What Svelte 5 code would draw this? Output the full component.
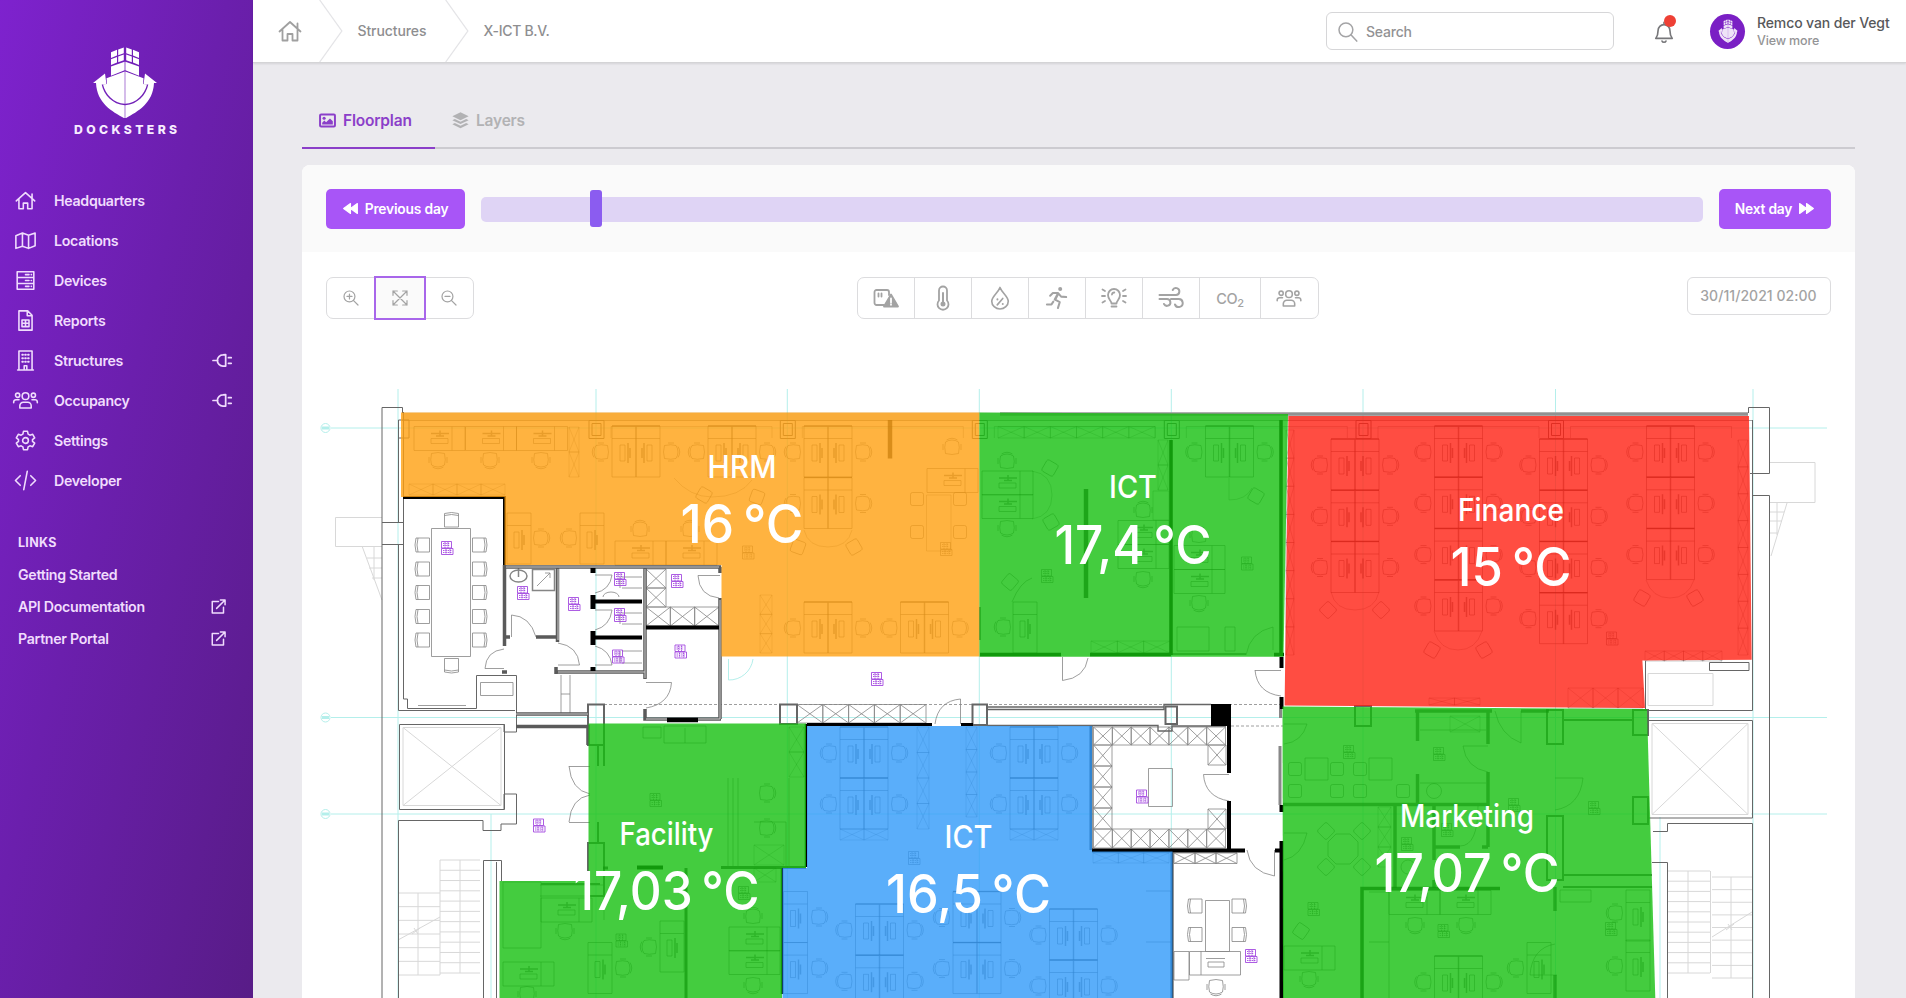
<script>
  const nav = [
    { label: 'Headquarters', icon: 'home' },
    { label: 'Locations', icon: 'map' },
    { label: 'Devices', icon: 'server' },
    { label: 'Reports', icon: 'report' },
    { label: 'Structures', icon: 'building', plug: true },
    { label: 'Occupancy', icon: 'users', plug: true },
    { label: 'Settings', icon: 'gear' },
    { label: 'Developer', icon: 'code' }
  ];
  const links = [
    { label: 'Getting Started', external: false },
    { label: 'API Documentation', external: true },
    { label: 'Partner Portal', external: true }
  ];
  const layers = ['device', 'thermo', 'drop', 'run', 'bulb', 'wind', 'co2', 'users'];

  const zones = [
    { name: 'HRM', temp: '16 °C', fill: '#ffa010', x: 742, y1: 477.5, y2: 543, w1: 69, w2: 123, pts: '401,412.5 979.5,412.5 979.5,656.5 721.5,656.5 721.5,565 504.5,565 504.5,497 401,497' },
    { name: 'ICT', temp: '17,4 °C', fill: '#15bf0f', x: 1133, y1: 497.7, y2: 564, w1: 48, w2: 157, pts: '979.5,412.5 1288,414 1283.5,656.7 979.5,656.7' },
    { name: 'Finance', temp: '15 °C', fill: '#ff2113', x: 1511, y1: 520.5, y2: 586, w1: 106, w2: 121, pts: '1288.4,416 1749,416 1751.7,659.7 1642.4,660.5 1645,708 1284.6,705.5' },
    { name: 'Facility', temp: '17,03 °C', fill: '#15bf0f', x: 666.5, y1: 844.5, y2: 909.5, w1: 94, w2: 186, pts: '588.5,723.5 806,723.5 806,868 782,868 782,998 499.5,998 499.5,881 588.5,881' },
    { name: 'ICT', temp: '16,5 °C', fill: '#319af9', x: 968.5, y1: 847.7, y2: 913, w1: 48, w2: 165, pts: '807,726 1092,726 1092,851.5 1172.5,851.5 1172.5,998 782.5,998 782.5,868 807,868' },
    { name: 'Marketing', temp: '17,07 °C', fill: '#15bf0f', x: 1467, y1: 826.7, y2: 891.7, w1: 134, w2: 185, pts: '1282.5,706.5 1647,709 1655.3,998 1283,998' }
  ];

  // paired desks, chairs on both sides
  const pods = [
    [612, 426], [708, 426], [804, 426], [804, 477.5], [804, 602], [900.5, 602], [1205.5, 426],
    [1331, 439], [1331, 490.3], [1331, 541.5],
    [1434.5, 426], [1434.5, 477.3], [1434.5, 528.6], [1434.5, 580],
    [1539.5, 439], [1539.5, 490.3], [1539.5, 541.5], [1539.5, 592.7],
    [1646.5, 426], [1646.5, 477.3], [1646.5, 528.6],
    [840, 727], [840, 778], [1010, 727], [1010, 778],
    [855.5, 904], [855.5, 955.3], [953, 891.5], [953, 942.6], [1049.5, 909], [1049.5, 960], [1434.5, 956]
  ];
  // single desks lying flat
  const flatDesks = [
    [414, 426.5], [465.5, 426.5], [516.5, 426.5], [615, 541], [666, 541],
    [541, 898], [503, 962], [729, 927], [729, 950.5], [982, 471], [982, 494.5],
    [1118, 520.5], [1118, 544.5], [1174, 545.5], [1174, 569.5], [1389, 890.5], [1440, 890.5], [1284, 946], [927, 468.5]
  ];
  // single desks standing upright
  const tallDesks = [
    [507, 513], [580, 513], [588, 942.5], [660, 921], [1013, 602], [1527, 942.5], [1626, 890], [1626, 940], [783.5, 891.5], [783.5, 942.6]
  ];
  // chairs as x, y, rotation; the back faces down at 0
  const chairs = [
    [438, 460, 0], [490, 460, 0], [541, 460, 0], [640, 529, 180], [690, 529, 180], [541, 538, -90], [569, 538, 90],
    [565, 931, 0], [527, 994, 0], [623, 968, -90], [649, 947, 90], [753, 916, 180], [753, 985, 0],
    [1007, 461, 180], [1007, 528, 0], [1143, 510, 180], [1143, 579, 0], [1199, 603, 0], [1199, 535, 180], [1003, 627, 90],
    [1415, 925, 0], [1466, 925, 0], [1309, 979, 0], [1516, 968, 90], [1615, 913, 90], [1615, 966, 90],
    [819, 917, -90], [819, 968, -90], [767, 793, -90], [767, 828, -90], [952, 447, 180]
  ];
  const softChairs = [
    [1050, 468, 30], [1051, 522, -30], [1010, 582, 40], [1256, 496, 30], [1328, 610, 45], [1381, 610, 45],
    [1432, 650, 30], [1484, 650, -30], [1642, 598, 30], [1695, 598, -30], [798, 547, 20], [854, 547, -30], [704, 495, 30], [757, 497, 20],
    [1326, 831, 45], [1362, 831, 45], [1326, 867, 45], [1362, 867, 45], [1301, 931, 35],
    [917, 499, 0], [960, 499, 0], [917, 532, 0], [960, 532, 0],
    [1295, 769, 0], [1337, 769, 0], [1360, 769, 0], [1295, 791, 0], [1337, 791, 0], [1360, 791, 0], [1403, 791, 0]
  ];
  // table chairs as x, y and the side their back is on
  const meetingChairs = [
    ...[545, 569, 592.5, 616.5, 640].flatMap((y) => [[422.5, y, -90], [479.5, y, 90]]),
    [451.5, 520, 0], [451.5, 665.5, 180], [1195, 906, -90], [1239, 906, 90], [1195, 934.5, -90], [1239, 934.5, 90]
  ];
  const openTags = [
    [447, 548], [523, 593], [574, 604], [620, 579], [620, 615], [618, 656.5], [677, 581], [680.5, 651.5], [877, 679],
    [539, 825.5], [1142, 796.5], [1251, 956]
  ];
  const zoneTags = [
    [748, 552.5], [946, 549], [1047, 576], [1247, 563.5], [1612, 638.5],
    [655.5, 800], [621.5, 940.5], [744, 893], [914, 858], [1349, 752], [1439, 754], [1594, 808], [1313.5, 909],
    [1443.5, 931], [1611, 929], [1447, 830], [1407, 844], [1514, 805]
  ];
  const gridX = [398, 596, 787.3, 979.3, 1171.3, 1363, 1555.5, 1753];

  // a run of n crossed cabinets
  function run(x, y, w, h, n, vertical = false) {
    let d = '';
    for (let i = 0; i < n; i++) {
      const a = vertical ? x : x + (w / n) * i;
      const b = vertical ? y + (h / n) * i : y;
      const cw = vertical ? w : w / n;
      const ch = vertical ? h / n : h;
      d += `M${a} ${b}h${cw}v${ch}h${-cw}zl${cw} ${ch}m0 ${-ch}l${-cw} ${ch}`;
    }
    return d;
  }
  const cabinets = [
    run(646, 569, 20, 38, 2, true), run(646, 607, 73, 19, 3), run(797, 704.5, 129, 18.5, 5),
    run(1093.5, 727, 132, 18, 7), run(1093.5, 745, 18.5, 84, 4, true), run(1093.5, 829, 132, 19, 7),
    run(1208, 745, 18, 20, 1), run(1208, 809, 18, 20, 1), run(1174, 853, 63, 10.5, 3)
  ].join('');
  const softCabinets = [
    run(409, 484, 96, 11, 4), run(569, 427, 10, 50, 2, true), run(760, 595, 12, 58, 3, true), run(998, 426.5, 157, 11.5, 6),
    run(1158, 440, 10, 50, 2, true), run(1091, 641, 79, 12, 3), run(789, 727, 15, 50, 2, true), run(917, 727, 12, 102, 4, true),
    run(966, 727, 11, 90, 4, true), run(1093, 853, 76, 10, 3), run(1010, 829, 48, 11, 2), run(840, 829, 48, 11, 2),
    run(1645, 651, 77, 10, 4), run(1568, 688, 75, 20, 3), run(1738, 440, 10, 215, 8, true), run(1286, 430, 8, 225, 8, true),
    run(1378, 807, 13, 60, 3, true), run(1450, 716, 30, 16, 1), run(1429, 698, 51, 7, 2), run(754, 868, 22, 14, 1), run(754, 845, 30, 20, 1)
  ].join('');

  function steps(x1, x2, y1, y2, n) {
    let d = '';
    for (let i = 0; i <= n; i++) d += `M${x1} ${y1 + ((y2 - y1) / n) * i}H${x2}`;
    return d;
  }
  const stairs = [
    steps(398, 440, 893, 975, 6), steps(440, 480, 860, 973, 11), steps(1668, 1710, 871, 973, 10), steps(1712, 1752, 877, 978, 8),
    'M440 860V975M460 860V973M418 893V975M1688 871V973M1710.5 871V973M1731 877V978M398 940L440 917M1712 937L1752 912',
    'M412 934l8 -6M414 928l4 6M1726 930l8 -6M1728 924l4 6',
    'M362 546L382 600M367 558H382M369 568H382M372 578H382M374 546V580M1787 503L1771 556M1770 512H1784M1770 521H1782M1770 533H1778M1777 503V535'
  ].join('');
</script>

{#snippet ship()}
  <g fill="#fff">
    <path d="M18 5.500l6-2.500v6l-6 2.500zM25.200 2.600l5.600-2v6l-5.600 2zM38.800 2.600l-5.600-2v6l5.600 2zM46 5.500l-6-2.500v6l6 2.500zM18 13l6-2.500v6l-6 2.500zM25.200 10l5.600-2v6l-5.600 2zM38.800 10l-5.600-2v6l5.600 2zM46 13l-6-2.500v6l6 2.500z" />
    <path d="M18 20.500l13.600-5v9L18 30.500zM46 20.500l-13.600-5v9L46 30.500z" />
    <path d="M31.700 26v34C21 59.500 12.500 50 10 39.500l4-.500L13.500 33z" />
    <path d="M32.300 26v34C43 59.500 51.500 50 54 39.500l-4-.500.500-6z" />
    <path d="M0 38L12 28l1.500 11.500H8.700c2 11 11 21 23 22V75.500C20 68.500 4 60 3 38z" />
    <path d="M64 38L52 28l-1.500 11.500h4.800c-2 11-11 21-23 22V75.500C44 68.500 60 60 61 38z" />
  </g>
{/snippet}

{#snippet icon(name)}
  <svg class="ico i-{name}" viewBox="0 0 24 24" fill="none" stroke="currentColor" stroke-width="1.8" stroke-linejoin="round" stroke-linecap="round">
    {#if name === 'home'}
      <path d="M1.500 12.500L12 3l10.500 9.500M19.500 9.500V4.500M4.500 10.500V21.500H9.500V15H14.500V21.500H19.500V10.500" />
    {:else if name === 'map'}
      <path d="M1 6.500L8.500 3.500 15.500 6 23 3.500V18L15.500 21 8.500 18.500 1 21zM8.500 3.500V18.500M15.500 6V21" />
    {:else if name === 'server'}
      <path d="M2.500 2h19v20h-19zM2.500 8.600h19M2.500 15.400h19M12 5.300h4M12 12h4M12 18.700h4M18.600 5.300h.2M18.600 12h.2M18.600 18.700h.2" />
    {:else if name === 'report'}
      <path d="M4.500 1h10l5 5V23H4.500zM14 1.300V6.500H19M8 11.500h8v7.500H8zM8 15.200h8M12 11.500v7.500" />
    {:else if name === 'building'}
      <path d="M3 22.800H21M4.500 22.800V1.200H19.500V22.800M10.500 22v-4h3v4" />
      <path d="M8.300 5.500h.8M11.600 5.500h.8M14.900 5.500h.8M8.300 9.500h.8M11.600 9.500h.8M14.900 9.500h.8M8.300 13.500h.8M11.600 13.500h.8M14.900 13.500h.8" stroke-width="2.200" />
    {:else if name === 'users'}
      <circle cx="12" cy="7" r="3.800" /><circle cx="3" cy="6" r="2.400" /><circle cx="21" cy="6" r="2.400" />
      <path d="M5.500 20.500v-2.500a4 4 0 0 1 4-4h5a4 4 0 0 1 4 4V20.500zM-1.500 14.500v-.8a2.600 2.600 0 0 1 2.600-2.600h3.500M25.500 14.500v-.8a2.600 2.600 0 0 0-2.600-2.600h-3.500" />
    {:else if name === 'gear'}
      <circle cx="12" cy="12" r="3.300" />
      <path d="M9.700 1.500h4.600l.7 3.200 2 1.200 3.200-1 2.300 4-2.500 2.100v2l2.500 2.100-2.300 4-3.200-1-2 1.200-.7 3.200H9.700l-.7-3.200L7 18.100l-3.200 1-2.300-4L4 13v-2L1.500 8.900l2.300-4 3.200 1 2-1.200z" />
    {:else if name === 'code'}
      <path d="M6 6.500L.5 12 6 17.500M18 6.500L23.500 12 18 17.500M14 1.500L10 22.500" />
    {:else if name === 'plug'}
      <path d="M0 12H6M12.500 5a7 7 0 0 0 0 14H16V4.500zM19.500 8.500H23M19.500 15.500H23" stroke-width="2.200" />
    {:else if name === 'external'}
      <path d="M12 4H2V22.500H20V13M15 1.500H22.500V9M22.500 1.500L9 15" stroke-width="2.400" />
    {:else if name === 'search'}
      <circle cx="9.500" cy="10" r="8.300" /><path d="M15.500 16L22.500 23.500" />
    {:else if name === 'bell'}
      <path d="M3 19C5 16.500 5.500 14 5.500 10.500a6.500 6.500 0 0 1 13 0C18.500 14 19 16.500 21 19zM12 4V1.500M9.800 21.800a2.300 2 0 0 0 4.400 0" />
    {:else if name === 'zoomin'}
      <circle cx="9.700" cy="9.700" r="8.200" /><path d="M15.500 15.500L22.500 22.500M9.700 6v7.500M6 9.700h7.500" />
    {:else if name === 'zoomout'}
      <circle cx="9.700" cy="9.700" r="8.200" /><path d="M15.500 15.500L22.500 22.500M6 9.700h7.500" />
    {:else if name === 'expand'}
      <path d="M1.500 8V1.500H8M16 1.500H22.500V8M22.500 16V22.500H16M8 22.500H1.500V16M1.500 1.500L22.500 22.500M22.500 1.500L1.500 22.500" />
    {:else if name === 'image'}
      <rect x="1.500" y="3.500" width="21" height="17" rx="1.500" stroke-width="2.800" />
      <circle cx="7.200" cy="8.800" r="2.200" fill="currentColor" stroke="none" /><path d="M4.500 17.500V15l3-3 2.500 2.500L15.500 9 19.500 13v4.500z" fill="currentColor" stroke="none" />
    {:else if name === 'layers'}
      <g fill="currentColor" stroke="none"><path d="M12 .5L23.500 6 12 11.500.500 6z" /><path d="M.5 11.500L4 9.800l8 3.900 8-3.900 3.500 1.700L12 17z" /><path d="M.5 17.300L4 15.600l8 3.900 8-3.900 3.500 1.700L12 23z" /></g>
    {:else if name === 'back'}
      <path d="M12 4V20L1 12zM23 4V20L12 12z" fill="currentColor" />
    {:else if name === 'forward'}
      <path d="M12 4V20L23 12zM1 4V20L12 12z" fill="currentColor" />
    {:else if name === 'device'}
      <path d="M10 19H2.500a2 2 0 0 1-2-2V6a2 2 0 0 1 2-2H13a2 2 0 0 1 2 2V9M4.500 7.500v3M7.500 7.500v3" />
      <path d="M17 8.500L24 20.500H10z" fill="currentColor" /><path d="M17 12.500v4M17 18.500v.3" stroke="#fff" />
    {:else if name === 'thermo'}
      <path d="M8 14.500V4.500a4 4 0 0 1 8 0V14.500a5.500 5.500 0 1 1-8 0z" /><path d="M12 7V18" stroke-width="2" /><circle cx="12" cy="18" r="1.600" fill="currentColor" />
    {:else if name === 'drop'}
      <path d="M12 .5C14 6 21 10.500 21 15.500a9 8.500 0 0 1-18 0C3 10.500 10 6 12 .5zM15 12.500l-6 7" /><circle cx="9.200" cy="13.500" r="1.100" fill="currentColor" stroke="none" /><circle cx="15" cy="18.500" r="1.100" fill="currentColor" stroke="none" />
    {:else if name === 'run'}
      <circle cx="15.500" cy="2.200" r="2.200" fill="currentColor" stroke="none" /><path d="M4.500 9.500L7.500 6.500h5.500L16.500 10.500 22 11M13 7L9.500 13.500 15 16.500 13 23M12.500 9L10 14M8 16L6 19H1" stroke-width="2.200" />
    {:else if name === 'bulb'}
      <path d="M9.500 17.500c0-3-3.500-4-3.500-8.500a6 6 0 0 1 12 0c0 4.500-3.500 5.500-3.500 8.500zM9.500 20.500h5M10 8.500a2.300 2.300 0 0 1 2.300-2M3 10H0M3 5L.5 3.500M3 15L.5 16.500M21 10h3M21 5l2.500-1.500M21 15l2.500 1.500" />
    {:else if name === 'wind'}
      <path d="M.5 9H17a3.500 3.500 0 1 0-3.300-5M.5 13H8a3.400 3.400 0 1 1-3 5M12 13h7.500a4 4 0 1 1-3.500 5.500" stroke-width="2" />
    {/if}
  </svg>
{/snippet}

<div class="app">
  <aside>
    <div class="brand">
      <svg width="64" height="71" viewBox="0 0 64 75" preserveAspectRatio="none">{@render ship()}</svg>
      <span>DOCKSTERS</span>
    </div>
    <nav>
      {#each nav as item}
        <a class="item">
          {@render icon(item.icon)}
          <span>{item.label}</span>
          {#if item.plug}{@render icon('plug')}{/if}
        </a>
      {/each}
    </nav>
    <div class="links">
      <h2>LINKS</h2>
      {#each links as link}
        <a><span>{link.label}</span>{#if link.external}{@render icon('external')}{/if}</a>
      {/each}
    </div>
  </aside>

  <div class="main">
    <header>
      <div class="crumbs">
        <a class="crumb first">{@render icon('home')}</a>
        <svg class="sep" viewBox="0 0 24 63"><path d="M.5 0L23 31.500.5 63" fill="none" stroke="#e4e4e7" stroke-width="1.300" /></svg>
        <a class="crumb second">Structures</a>
        <svg class="sep" viewBox="0 0 24 63"><path d="M.5 0L23 31.500.5 63" fill="none" stroke="#e4e4e7" stroke-width="1.300" /></svg>
        <a class="crumb third">X-ICT B.V.</a>
      </div>
      <div class="tools">
        <label class="search">{@render icon('search')}<span>Search</span></label>
        <div class="bell">{@render icon('bell')}<i></i></div>
        <div class="avatar"><svg width="20" height="24" viewBox="0 0 64 75">{@render ship()}</svg></div>
        <div class="user"><b>Remco van der Vegt</b><span>View more</span></div>
      </div>
    </header>

    <main>
      <div class="tabs">
        <a class="tab on">{@render icon('image')}<span>Floorplan</span></a>
        <a class="tab">{@render icon('layers')}<span>Layers</span></a>
      </div>

      <section class="card">
        <div class="timeline">
          <button class="day prev">{@render icon('back')}<span>Previous day</span></button>
          <div class="track"><i style="left: 108.500px"></i></div>
          <button class="day next"><span>Next day</span>{@render icon('forward')}</button>
        </div>

        <div class="toolbar">
          <div class="group zoom">
            <button>{@render icon('zoomin')}</button>
            <button class="on">{@render icon('expand')}</button>
            <button>{@render icon('zoomout')}</button>
          </div>
          <div class="group layers-group">
            {#each layers as layer}
              <button class:wide={layer === 'co2'}>
                {#if layer === 'co2'}<span class="co">CO<sub>2</sub></span>{:else}{@render icon(layer)}{/if}
              </button>
            {/each}
          </div>
          <div class="date">30/11/2021 02:00</div>
        </div>

        <svg class="plan" viewBox="302 345 1552.500 653" width="1552.500" height="653">
          <defs>
            <g id="chair">
              <path d="M-6.500 -6.500Q-8 0 -6.500 5Q0 9 6.500 5Q8 0 6.500 -6.500Q0 -8.500 -6.500 -6.500zM-9 -3V3M9 -3V3M-5.500 7Q0 10.500 5.500 7" />
            </g>
            <rect id="soft" x="-6.500" y="-6.500" width="13" height="13" rx="2" />
            <path id="seat" d="M-7 -6.500Q0 -8.500 7 -6.500V7H-7zM-7 -4.500Q0 -6.500 7 -4.500" />
            <g id="pod">
              <path d="M0 0H48V51H0zM0 12.500H48" />
              <path d="M24 0V51M0 0H48" stroke-width="1.500" />
              <path d="M8 19h5v16H8zM35 19h5v16h-5z" />
              <path d="M16 17V37M32 17V37M18 22v10M30 22v10" stroke-width="1.500" />
              <use href="#chair" transform="translate(-11 26) rotate(90)" />
              <use href="#chair" transform="translate(59 26) rotate(-90)" />
            </g>
            <g id="flat">
              <path d="M0 0H51V24H0zM38 0V24M17 12H34V17H17z" />
              <path d="M17 7H35M22 9.500H30M26 4V9" stroke-width="1.500" />
            </g>
            <g id="tall">
              <path d="M0 0H24V51H0zM0 12.500H24M7 19h5v16H7z" />
              <path d="M15 17V37M17 22v10" stroke-width="1.500" />
            </g>
            <g id="tag">
              <path d="M-5.500 -6.500H4.500V0H-5.500zM-5.500 .5H6V6.500H-5.500z" />
              <path d="M-4 -4.500H3M-4 -2.500H3M-4 2.500H5M-4 4.500H5M-2 -6V0M1 -6V0M-1 1V6M3 1V6" stroke-dasharray="1.500 .8" />
            </g>
          </defs>

          <g class="guide">
            {#each gridX as x}<path d="M{x} 389V998" />{/each}
            <path d="M331 428H1827M331 717.500H1827M331 814H1827M491 814V998M1660 800V998" />
            <circle cx="325.500" cy="428" r="4.500" /><circle cx="325.500" cy="717.500" r="4.500" /><circle cx="325.500" cy="814" r="4.500" />
            <path d="M322 428h7M322 717.500h7M322 814h7" stroke-width="3" />
            <path d="M728.500 659V680A24 24 0 0 0 753 659" />
          </g>

          <!-- rooms without a tint keep a white floor -->
          <g fill="#fff" stroke="none">
            <path d="M404 499H503V708H404zM506 568H587V714H506zM604 568H719V703H604zM400 725H504V809H400zM1649 721H1751V817H1649z" />
          </g>

          <path class="faint" d="M335.500 517.500H382M335.500 517.500V546.500H382M1769 462.500H1815V502.500H1769M403 727.500h98v78h-98zl98 78m0-78l-98 78M1652 723.500h96v91h-96zl96 91m0-91l-96 91M1648 673.500H1713V705.500H1648z" />
          <path class="faint" d={stairs} />

          <g class="furn">
            {#each pods as [x, y]}<use href="#pod" {x} {y} />{/each}
            {#each flatDesks as [x, y]}<use href="#flat" {x} {y} />{/each}
            {#each tallDesks as [x, y]}<use href="#tall" {x} {y} />{/each}
            {#each chairs as [x, y, r]}<use href="#chair" transform="translate({x} {y}) rotate({r})" />{/each}
            {#each softChairs as [x, y, r]}<use href="#soft" transform="translate({x} {y}) rotate({r})" />{/each}
            {#each zoneTags as [x, y]}<use href="#tag" {x} {y} />{/each}
            <path d={softCabinets} opacity=".6" />
            <path d="M926.500 495H951V551H926.500zM1032 471Q1052 474 1052 495Q1052 516 1032 519M1229 478V500Q1246 500 1252 488M804 530Q808 547 828 547Q848 547 852 530M1331 592Q1335 610 1355 610Q1375 610 1379 592M1434 631Q1440 650 1458 650Q1476 650 1482 631M1646 580Q1652 598 1670 598Q1688 598 1694 580M674 478Q690 497 712 497Q740 497 752 480M1153 491H1169V520H1153z" opacity=".7" />
            <path d="M664 726H706V743H664zM685 728V743M643 727H661V738H643zM728 778V866M733 778V866M738 778V866M789 778V866M754 822H786V866M503 882H541V948H503zM540 885H604M540 896H604V920M1305 758H1328V780H1305zM1369 758H1392V780H1369zM1420 783H1486M1420 730H1486M1336 834l-8 8v14l8 8h14l8-8v-14l-8-8zM1369 892H1389V998M1369 942H1389M1560 890H1591V902H1560zM1146 891H1171V998M1146 942H1171M1177 627H1209V651H1177zM1225 627H1235V651H1225zM1032 578Q1020 582 1012 602" />
            <circle cx="1434" cy="791" r="7.500" /><circle cx="1408" cy="867" r="7" />
            <path d="M1488 746H1463Q1466 768 1488 772M1521 711V743Q1500 735 1495 711M1555 778H1583Q1580 806 1555 810M1557 975H1530Q1532 948 1555 944M1284 724H1307Q1302 742 1284 744M1284 833H1307Q1302 856 1284 860M1273 627Q1250 632 1246 655M1273 627V650M1478 806Q1478 846 1460 846" />
          </g>

          <!-- tables and fittings in the open rooms -->
          <g class="thin">
            {#each meetingChairs as [x, y, r]}<use href="#seat" transform="translate({x} {y}) rotate({r})" />{/each}
            <use href="#chair" transform="translate(1216 987)" />
            <path d="M431.500 528.500H470.500V656.500H431.500zM1205.500 900.500h24v51h-24zM1148.500 768.500H1172.500V806.500H1148.500zM1174 951.500H1189V980H1174zM1189.500 951.500H1240.500V975H1189.500zM1201 951V975M1208 962h16v5h-16zM1206 958.500h19" />
            <path d={cabinets} />
            <ellipse cx="518.500" cy="576" rx="8.500" ry="6" stroke-width="1.500" /><path d="M518.500 568V577M532.500 569.500H554.500V590.500H532.500z" stroke-width="1.500" /><path d="M537 586L550 573M545 573h5v5" />
            <path d="M511.500 637V615Q530 616 536 637M558 643Q578 646 579.500 665H558M504 649Q486 651 485 668.500H504M595 575H612Q610 590 595 593M595 610H612Q610 626 595 630M595 646Q610 650 612 665H595M646 682.500H671.500Q670 704 646 708M698 575.500H720M698 575.500Q699 596 719 598" />
            <path d="M622 577H642M622 588H642M620 577V588M622 613H642M622 624H642M620 613V624M622 651H642M622 663H642M620 651V663M603 597a8 5 0 0 1 16 0M561 675V715M570 675V715M561 694h9" />
            <path d="M569 766.500H590M569 766Q571 790 590 794M569 822.500H590M569 822Q571 798 590 795M960.500 724V699Q938 701 935 724M1229 774.500H1203.500Q1205 797 1229 801M1255 670.500H1281M1255 670Q1257 693 1281 696M1274.500 850V876Q1250 872 1247 850M1062.500 657V680.500Q1085 678 1088 658" />
            <path d="M604 704.500H1283M1231 726H1283" stroke-dasharray="3 2" />
            <path d="M418 705.500H466M480.500 682.500H513V695.500H480.500z" />
          </g>

          <!-- outer and inner walls -->
          <g class="edge">
            <path d="M382 998V407.500H402.500V413M398.500 420H409V438H398.500zM398.500 438V522M382 522.500H403M382 544.500H403M398.500 544V710.500H515M403.500 412V699H407.500V708.500H476.500V675.500H516.500V732H504V724" />
            <path d="M399.500 724.500H504.500V809.500H399.500zM504 809V794H516.500V824H501V830.500H483V820.500H398.500V998M483.500 998V860.500H501.500V881M496.500 862V998" />
            <path d="M1748.500 413V407.500H1769.500V473.500H1750M1752 495.500H1769.500V998M1752.500 420V660M1752.500 495V710.500H1645.500V661M1709.500 662.500H1749V670.500H1709.500zM1649 720.500H1752.500V818H1649M1653 831.500H1667.500V823.500H1752.500V998M1652 862.500H1667.500V998" />
            <path d="M402 420.500H1752" opacity=".6" />
            {#each gridX.slice(1, 7) as x}
              <path d="M{x - 7} 420.500h15v18h-15zM{x - 4} 423.500h9v12h-9z" />
              <path d="M{x + 15} 438V426.500H{x + 176}V438" opacity=".4" />
            {/each}
            <path d="M588 704.500H604V745H588zM780 704.500H797V724H780zM972.500 704.500H987V725H972.500zM1165.500 706.500H1177V724H1165.500z" stroke-width="2" />
            <path d="M987 709.500H1164V704.500H1211M987 725.500H1158V731H1172V726H1226M988 707H1164" stroke-width="1.400" />
            <path d="M1355 706H1371V726H1355zM1547 710H1563V744H1547zM1547 816H1563V880H1547zM1633 710H1648V735H1633zM1633 797H1648V824H1633zM1563 720H1633M1563 875H1652M1563 887H1652M588 843H604V896H588zM541 884H600M604 745V766M598 745V766M598 822V843" stroke-width="2" />
          </g>
          <path d="M1000 414H1748" stroke="#a6a6a6" stroke-width="3.500" />
          <g class="wall">
            <path d="M403 497.500H504.500V565" stroke-width="3" />
            <path d="M504 567H721M504.500 565V646M506 637H510M536 637H557.500V642M557.500 567V640M556 672H645.500M556 667V674M645 567V679M516 714H588M516 726.500H588V745M645 709V719H721M720 598V719M720 567V573M502 672h5" stroke="#5a5a5a" stroke-width="3.500" />
            <path d="M506 567H719M645 569V678M558 569V640M558 672H645M516 714H588M646 719H720V600" stroke="#ccc" stroke-width="1" />
            <path d="M593 601.500H642M593 637.500H642M646 627.500H719" stroke-width="4" />
            <path d="M593 568v5M593 595v14M593 631v14M593 667v4" stroke-width="5" />
            <path d="M667 720H698" stroke-width="4.500" />
            <path d="M807 724.500H932M961 724.500H973" stroke-width="3" />
            <path d="M806 724V867M782 868V994" stroke-width="2.500" />
            <path d="M1211 704H1231V726H1211z" fill="#000" stroke="none" />
            <path d="M1229 726V773M1229 801V849M1092 850.500H1245M1275 850.500H1283M1281.500 657V668M1281.500 697V709M1281.500 805V812M1281.500 841V998" stroke-width="4" />
            <path d="M1091 726V850M1172 852V998" stroke-width="3" stroke="#333" />
            <path d="M1280.500 709V718M1280 746V805" stroke="#888" stroke-width="3" />
            <path d="M890 420V458.500M1086 489V598" stroke-width="4.500" opacity=".75" />
            <path d="M1281 420V656M980 654.500H1061M1090 654.500H1171M1171 440V655M1274 654.500H1284" stroke-width="3.500" />
            <path d="M1171 654H1246M980 607V640" stroke-width="2" opacity=".5" />
            <path d="M402 416.500H1748" stroke-width="8" opacity=".12" />
            <path d="M721 867.500H806M686 868V998M603 868h5" stroke-width="3" opacity=".7" /><path d="M637 867.500H663" stroke-width="4" />
            <path d="M1417.500 711V741M1417.500 774V805M1415 711H1492M1488 711V744M1488 772V847M1521 711H1549M1283 804.500H1488M1395 806V888M1434 806V860M1434 847H1460M1434 880v8M1482 847h6M1555 887V911M1555 975V998" stroke-width="3.500" opacity=".6" />
            <path d="M1500 888.500H1362V998" stroke-width="3.500" opacity=".8" />
          </g>
          <g class="tag">
            {#each openTags as [x, y]}<use href="#tag" {x} {y} />{/each}
          </g>

          {#each zones as z}
            <polygon points={z.pts} fill={z.fill} fill-opacity=".8" />
          {/each}
          <g class="reading">
            {#each zones as z}
              <text x={z.x} y={z.y1} font-size="31" textLength={z.w1} lengthAdjust="spacingAndGlyphs">{z.name}</text>
              <text class="temp" x={z.x} y={z.y2} font-size="53" textLength={z.w2} lengthAdjust="spacingAndGlyphs">{z.temp}</text>
            {/each}
          </g>
        </svg>
      </section>
    </main>
  </div>
</div>

<style>
  :global(body) { margin: 0; overflow: hidden; }
  .app { display: flex; width: 1906px; height: 998px; overflow: hidden; font-family: Inter, "Liberation Sans", sans-serif; font-weight: 500; background: #ebeaee; }
  .ico { flex: none; overflow: visible; width: 20px; height: 20px; }
  button { font: inherit; color: inherit; background: none; border: 0; padding: 0; box-sizing: border-box; }

  aside { flex: none; width: 252.500px; color: #f0dcfd; background: linear-gradient(to bottom right, #7e22ce, #6b1fad 45%, #581c87); font-size: 14.200px; font-weight: 600; }
  .brand { display: flex; flex-direction: column; align-items: center; height: 133.500px; padding: 47px 2px 0 0; color: #f7ecff; }
  .brand span { margin-top: 4px; margin-left: 4px; font-weight: 800; font-size: 12.200px; line-height: 15px; letter-spacing: 3.400px; }
  nav { display: flex; flex-direction: column; }
  .item { display: flex; align-items: center; height: 40px; padding: 0 21px 0 15px; }
  .item span { flex: 1; margin-left: 18px; letter-spacing: -.3px; }
  .item .ico { width: 21px; height: 21px; }
  .item .ico.i-plug { width: 19px; height: 19px; }
  .links { display: flex; flex-direction: column; padding: 32px 27px 0 18px; letter-spacing: -.3px; }
  .links h2 { margin: 0 0 6px; font-size: 12.500px; line-height: 20px; font-weight: 700; letter-spacing: .3px; }
  .links a { display: flex; align-items: center; justify-content: space-between; height: 32px; }
  .links .ico { width: 15px; height: 15px; }

  .main { flex: 1; display: flex; flex-direction: column; min-width: 0; }
  header { display: flex; justify-content: space-between; height: 62px; background: #fff; border-bottom: 1px solid #d4d4d6; box-shadow: 0 1px 2px rgba(0, 0, 0, .1); }
  .crumbs { display: flex; align-items: center; color: #8e8e90; font-size: 14px; line-height: 20px; }
  .sep { width: 24px; height: 62px; }
  .crumb.first { display: flex; width: 40.500px; padding-left: 25.500px; }
  .crumb.first .ico { width: 24px; height: 24px; color: #a0a0a0; }
  .crumb.second { width: 87px; padding-left: 15px; letter-spacing: -.1px; }
  .crumb.third { padding-left: 15px; letter-spacing: -.3px; }
  .tools { display: flex; align-items: center; padding-right: 16px; }
  .search { display: flex; align-items: center; gap: 8px; box-sizing: border-box; width: 288px; height: 38px; padding-left: 11px; border: 1px solid #d6d6d8; border-radius: 6px; color: #929294; font-size: 14px; font-weight: 500; letter-spacing: -.2px; }
  .search .ico { width: 20px; height: 21px; color: #a4a4a6; }
  .bell { position: relative; margin-left: 39px; width: 22px; height: 22px; color: #77777a; }
  .bell .ico { display: block; width: 22px; height: 22px; margin-top: 1px; }
  .bell i { position: absolute; left: 11px; top: -5px; width: 12px; height: 12px; border-radius: 50%; background: #ee4035; }
  .avatar { display: flex; align-items: center; justify-content: center; width: 35px; height: 35px; margin-left: 35px; border-radius: 50%; background: #7a1fc4; }
  .avatar svg { opacity: .88; }
  .user { display: flex; flex-direction: column; width: 133px; margin-left: 12px; white-space: nowrap; }
  .user b { font-size: 14px; font-weight: 500; line-height: 18px; color: #58585a; letter-spacing: -.12px; }
  .user span { font-size: 12.500px; line-height: 17px; color: #949496; letter-spacing: -.15px; }

  main { flex: 1; display: flex; flex-direction: column; padding: 28px 51.500px 0 49.500px; min-height: 0; }
  .tabs { display: flex; height: 55.500px; border-bottom: 2px solid #cccbd0; }
  .tab { display: flex; align-items: center; gap: 7px; box-sizing: border-box; height: 57.500px; padding: 4px 19px 0 17px; font-size: 15.500px; font-weight: 600; color: #b2b2b4; border-bottom: 2px solid transparent; letter-spacing: -.2px; }
  .tab.on { width: 133px; color: #8b3fc9; border-color: #8b3fc9; }
  .tab .ico { width: 17px; height: 17px; }
  .card { flex: 1; margin-top: 16.500px; border-radius: 8px 8px 0 0; background: #fff; overflow: hidden; }
  .timeline { display: flex; align-items: flex-start; box-sizing: border-box; height: 87px; padding: 24px 24px 0; background: #fafafa; }
  .day { display: flex; align-items: center; justify-content: center; gap: 7px; height: 40px; padding-bottom: 1px; border-radius: 5px; background: #a855f7; color: #fff; font-size: 13.800px; font-weight: 600; letter-spacing: -.2px; }
  .day .ico { width: 15px; height: 15px; }
  .prev { width: 139px; }
  .next { width: 112px; }
  .track { position: relative; flex: 1; height: 24.500px; margin: 8px 16px 0; border-radius: 5px; background: #dfd4f5; }
  .track i { position: absolute; top: -7px; width: 12.500px; height: 37px; border-radius: 3px; background: #8b5cf0; }
  .toolbar { display: flex; justify-content: space-between; align-items: flex-start; height: 68px; padding: 25px 24px 0; color: #a3a3a3; }
  .group { display: flex; box-sizing: border-box; height: 42px; border: 1px solid #dcdcde; border-radius: 7px; }
  .group button { display: flex; align-items: center; justify-content: center; height: 40px; }
  .zoom button { width: 48px; }
  .zoom .ico { width: 16px; height: 16px; }
  .zoom button.on { width: 52px; height: 44px; margin: -2px -1px 0; border: 2px solid #a866ea; background: #fafafa; }
  .layers-group { margin-left: 171px; margin-right: 156px; }
  .layers-group button { width: 57px; border-right: 1px solid #dcdcde; }
  .layers-group button.wide { width: 61px; }
  .layers-group button:last-child { width: 56.500px; border: 0; }
  .layers-group .ico { width: 24px; height: 24px; }
  .layers-group .ico.i-run, .layers-group .ico.i-drop { width: 22px; height: 24px; }
  .layers-group .ico.i-users { width: 22px; height: 21px; }
  .co { font-size: 14.500px; letter-spacing: -.3px; }
  .co sub { font-size: 11px; vertical-align: -3px; line-height: 0; }
  .date { box-sizing: border-box; width: 144px; height: 38px; border: 1px solid #dcdcde; border-radius: 6px; font-size: 14px; line-height: 36px; text-align: center; letter-spacing: .05px; white-space: nowrap; }

  .plan { display: block; fill: none; }
  .guide { stroke: #b4efeb; stroke-width: 1; }
  .faint { stroke: #d8d8d8; stroke-width: 1; }
  .furn { stroke: #222; stroke-opacity: .5; stroke-width: .8; }
  .thin { stroke: #858585; stroke-width: .8; }
  .edge { stroke: #666; stroke-width: 1; }
  .wall { stroke: #000; }
  .tag { stroke: #a44be0; stroke-width: .9; }
  .reading { fill: #fff; text-anchor: middle; font-weight: 500; }
  .temp { word-spacing: -5px; }
</style>
